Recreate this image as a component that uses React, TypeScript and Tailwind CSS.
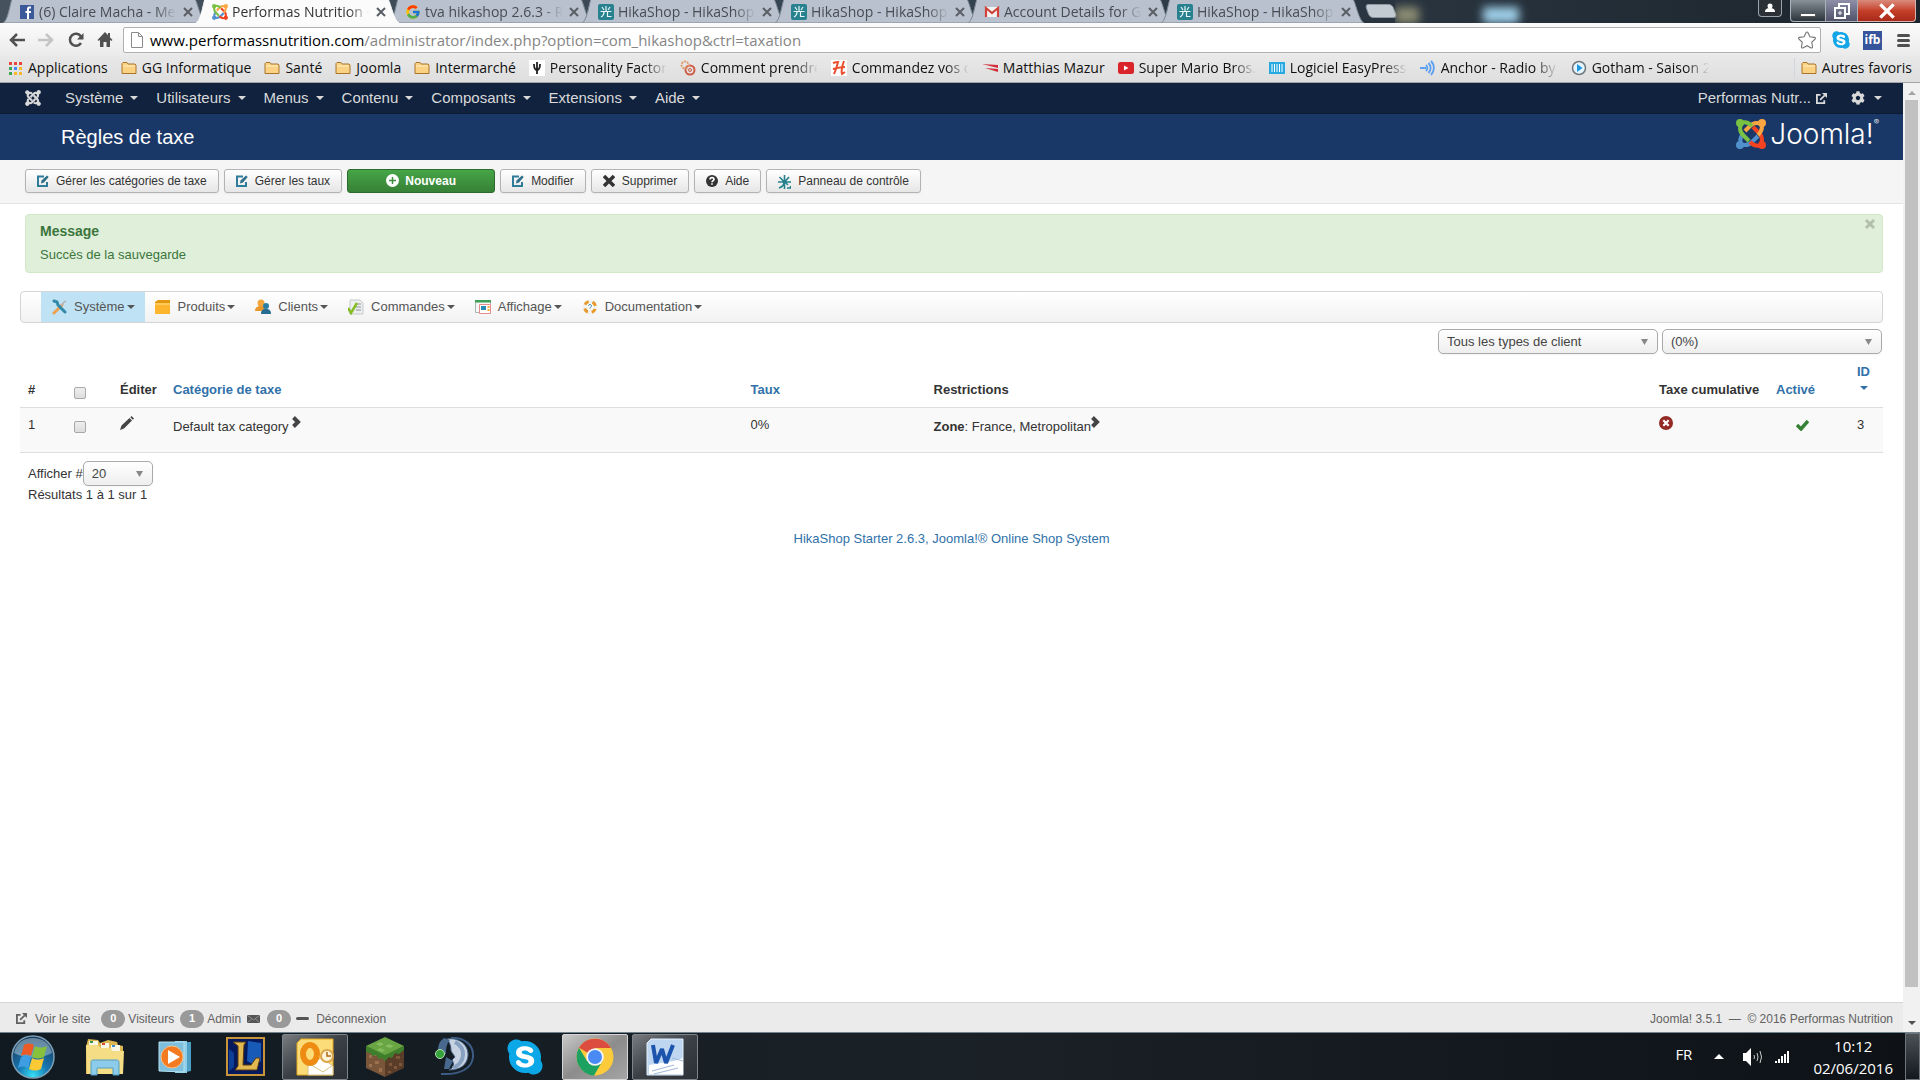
import React from "react";
import { FaJoomla, FaSkype, FaStar, FaCog } from "react-icons/fa";
import { FcGoogle } from "react-icons/fc";

/* ---------- small icons ---------- */

const Caret = ({ className = "" }: { className?: string }) => (
  <svg className={`h-1 w-2 shrink-0 ${className}`} viewBox="0 0 8 4" fill="currentColor">
    <path d="M0 0h8L4 4z" />
  </svg>
);

const Cross = ({ className = "" }: { className?: string }) => (
  <svg className={className} viewBox="0 0 12 12" stroke="currentColor" fill="none">
    <path d="M2 2l8 8M10 2l-8 8" />
  </svg>
);

const ExternalIcon = ({ className = "" }: { className?: string }) => (
  <svg className={className} viewBox="0 0 12 12" fill="none" stroke="currentColor" strokeWidth="2">
    <path d="M5 2H1v9h8V8" />
    <path d="M4.500 7.500l5-5" />
    <path d="M6.500 0H12v5.500z" fill="currentColor" stroke="none" />
  </svg>
);

const EditIcon = () => (
  <svg className="h-3 w-3" viewBox="0 0 12 12" fill="none" stroke="#2f7d9b" strokeWidth="2">
    <path d="M7 1.500H1V11h9V7" />
    <path d="M4 8.500l.5-3L10 .5 11.700 2 7 7.500z" fill="#2f6f8a" stroke="none" />
  </svg>
);

const FolderIcon = () => (
  <svg className="h-4 w-4 shrink-0" viewBox="0 0 16 16">
    <path d="M1 13.500V3.500L2 2.500h4l1 1.500h7l1 1v8.500z" fill="#fbd283" stroke="#a9752d" />
    <path d="M2 6h12" stroke="#fff0c4" />
  </svg>
);

const HikaIcon = () => (
  <svg className="h-4 w-4 shrink-0" viewBox="0 0 16 16">
    <rect width="16" height="16" rx="2" fill="#28818f" />
    <path
      d="M8 2v5M4 3l2 3M12 3l-2 3M2.500 7.500h11M6 8c0 3-1 4-3 5M9.500 8v4.500h4"
      stroke="#e8f6f7"
      strokeWidth="1.200"
      fill="none"
    />
  </svg>
);

const JoomlaMark = ({ className = "" }: { className?: string }) => (
  <svg className={className} viewBox="0 0 30 30" fill="none" strokeWidth="4" strokeLinejoin="round">
    <g stroke="#5091cd">
      <circle cx="4" cy="26" r="2" />
      <path d="M5 25C3 20 5 17 8 14M4 25c5 2 9 1 12-2l6-6" />
    </g>
    <g stroke="#f44321">
      <circle cx="26" cy="26" r="2" />
      <path d="M25 26c-5 2-8 0-11-3M25 25c2-5 1-8-2-11l-6-6" />
    </g>
    <g stroke="#f9a541">
      <circle cx="26" cy="4" r="2" />
      <path d="M25 5c2 4 0 8-3 11M25 5c-5-2-8-1-11 2l-5 5" />
    </g>
    <g stroke="#7ac143">
      <circle cx="4" cy="4" r="2" />
      <path d="M5 4c5-2 8 0 11 3M5 5c-2 5-1 8 2 11l6 6" />
    </g>
  </svg>
);

const FacebookIcon = () => (
  <svg className="h-4 w-4 shrink-0" viewBox="0 0 16 16">
    <rect x="1" y="1" width="14" height="14" fill="#3b5998" />
    <path d="M10 15V9h2V7h-2V5.500c0-.8.3-1 1-1h1V2.500h-2C8.500 2.500 8 4 8 5v2H6.500v2H8v6z" fill="#fff" />
  </svg>
);

const GmailIcon = () => (
  <svg className="h-4 w-4 shrink-0" viewBox="0 0 16 16">
    <rect x="1" y="3" width="14" height="10" fill="#f3f3f3" />
    <path d="M2 13V4l6 5 6-5v9" fill="none" stroke="#d0433a" strokeWidth="2.200" />
  </svg>
);

/* ---------- browser chrome ---------- */

const tabs = [
  { title: "(6) Claire Macha - Messages", icon: <FacebookIcon /> },
  { title: "Performas Nutrition - A", icon: <JoomlaMark className="h-4 w-4 shrink-0" />, active: true },
  { title: "tva hikashop 2.6.3 - Re", icon: <FcGoogle className="h-4 w-4 shrink-0" /> },
  { title: "HikaShop - HikaShop", icon: <HikaIcon /> },
  { title: "HikaShop - HikaShop", icon: <HikaIcon /> },
  { title: "Account Details for Gr", icon: <GmailIcon /> },
  { title: "HikaShop - HikaShop", icon: <HikaIcon /> },
];

const TabStrip = () => (
  <div className="flex h-[23px] items-stretch justify-between overflow-hidden bg-linear-to-r from-[#46535f] via-[#33424f] to-[#1c242c]">
    <div className="flex pl-[3px]">
      {tabs.map((tab, i) => (
        <div key={i} className={`relative -mr-[10px] flex w-[203px] items-center pr-3 pl-4 ${tab.active ? "z-10" : ""}`}>
          <svg className="absolute inset-0 h-full w-full" viewBox="0 0 203 23" preserveAspectRatio="none">
            <path
              d="M0 23C5 21 7 4 9 -1H192C195 4 198 21 203 23z"
              fill={tab.active ? "#fbfbfb" : "#b8c1cd"}
              stroke={tab.active ? "#fbfbfb" : "#7f8a97"}
            />
          </svg>
          <button className="relative flex min-w-0 flex-1 items-center gap-1 text-left">
            {tab.icon}
            <span
              className={`w-[142px] overflow-hidden text-[14px] leading-5 whitespace-nowrap [mask-image:linear-gradient(to_right,black_82%,transparent_97%)] ${
                tab.active ? "text-[#333]" : "text-[#474d55]"
              }`}
            >
              {tab.title}
            </span>
          </button>
          <button aria-label="Fermer l'onglet" className="relative text-[#5a5f66]">
            <Cross className="h-3 w-3 stroke-2" />
          </button>
        </div>
      ))}
      <button aria-label="Nouvel onglet" className="ml-[13px] mt-1 h-[14px] w-7 skew-x-[20deg] rounded-sm border border-[#8d98a3] bg-[#c3cbd2]" />
    </div>
    <div className="flex flex-1 items-end gap-16 overflow-hidden">
      <div className="h-4 w-6 bg-[#b9b48a] opacity-70 blur-[5px]" />
      <div className="h-4 w-9 bg-[#9fd0ea] blur-[5px]" />
    </div>
    <div className="flex items-start pr-1">
      <button aria-label="Profil" className="mr-2 flex h-[17px] w-6 items-center justify-center rounded-b border border-t-0 border-[#9aa3ab] bg-[#2a3036]">
        <svg className="h-3 w-3" viewBox="0 0 12 12" fill="#fff">
          <circle cx="6" cy="4" r="2.500" />
          <path d="M1 10c0-3 2-4 5-4s5 1 5 4z" />
        </svg>
      </button>
      <button aria-label="Réduire" className="flex h-[22px] w-9 items-end justify-center rounded-bl border border-t-0 border-[#aab2b9] bg-linear-to-b from-[#8b939a] to-[#2d353c] pb-1">
        <span className="h-[4px] w-4 border border-[#555] bg-white" />
      </button>
      <button aria-label="Restaurer" className="flex h-[22px] w-8 items-center justify-center border border-t-0 border-l-0 border-[#aab2b9] bg-linear-to-b from-[#8f90a8] to-[#50536a]">
        <svg className="h-4 w-4" viewBox="0 0 16 16" fill="none" stroke="#fff" strokeWidth="2">
          <path d="M5 4V1h10v10h-3" />
          <rect x="1" y="5" width="10" height="10" />
          <path d="M5 9h2v2H5z" strokeWidth="1" />
        </svg>
      </button>
      <button aria-label="Fermer" className="flex h-[22px] w-[58px] items-center justify-center rounded-br border border-t-0 border-l-0 border-[#d8b4ac] bg-linear-to-b from-[#d98a7c] via-[#c5402a] to-[#a8281a] text-white">
        <Cross className="h-5 w-5 stroke-2" />
      </button>
    </div>
  </div>
);

const AddressBar = () => (
  <div className="flex h-8 items-center bg-linear-to-b from-[#fbfbfb] to-[#ebebeb] pt-[2px] pr-[10px] pl-[9px]">
    <button aria-label="Précédent" className="mr-[13px]">
      <svg className="h-4 w-4" viewBox="0 0 16 16" fill="none" stroke="#505050" strokeWidth="2.500">
        <path d="M8 2L2 8l6 6M2 8h14" />
      </svg>
    </button>
    <button aria-label="Suivant" className="mr-[14px]">
      <svg className="h-4 w-4" viewBox="0 0 16 16" fill="none" stroke="#c4c4c4" strokeWidth="2.500">
        <path d="M8 2l6 6-6 6M14 8H0" />
      </svg>
    </button>
    <button aria-label="Actualiser" className="mr-[13px]">
      <svg className="h-4 w-4" viewBox="0 0 16 16" fill="none" stroke="#505050" strokeWidth="2.500">
        <path d="M13 11a6 6 0 1 1 0-6.500" />
        <path d="M15.500 1v6.500H9z" fill="#505050" stroke="none" />
      </svg>
    </button>
    <button aria-label="Accueil" className="mr-[10px]">
      <svg className="h-4 w-4" viewBox="0 0 16 16" fill="#505050">
        <path d="M8 0l7.500 8-1.300 1L13 7.800V15H9.500v-5h-3v5H3V7.800L1.800 9 .5 8z" />
        <path d="M11 1h2v4h-2z" />
      </svg>
    </button>
    <div className="flex h-[26px] flex-1 items-center rounded-xs border border-[#b0b0b0] bg-white px-1">
      <svg className="mx-[3px] h-4 w-3" viewBox="0 0 12 16" fill="#fff" stroke="#8a8a8a">
        <path d="M.5.5h7l4 4v11H.5zM7.500.5v4h4" />
      </svg>
      <div className="grid flex-1 items-center pl-1 text-[15px] leading-5">
        <input aria-label="Adresse" className="col-start-1 row-start-1 w-full outline-none" />
        <span className="pointer-events-none col-start-1 row-start-1 whitespace-nowrap text-[#858585]">
          <span className="text-black">www.performassnutrition.com</span>
          /administrator/index.php?option=com_hikashop&amp;ctrl=taxation
        </span>
      </div>
      <button aria-label="Ajouter aux favoris">
        <FaStar className="h-[18px] w-[18px] fill-white stroke-[#777] [stroke-width:36px]" />
      </button>
    </div>
    <button aria-label="Skype" className="ml-[10px]">
      <FaSkype className="h-5 w-5 bg-[radial-gradient(circle,white_45%,transparent_46%)] text-[#12a5e8]" />
    </button>
    <button aria-label="ifb" className="ml-[12px] h-[19px] w-[19px] bg-[#35549b] text-[12px] leading-4 font-bold text-white">
      ifb
    </button>
    <button aria-label="Menu" className="ml-[15px] flex w-[13px] flex-col gap-[2px]">
      <span className="h-[3px] rounded-xs bg-[#505050]" />
      <span className="h-[3px] rounded-xs bg-[#505050]" />
      <span className="h-[3px] rounded-xs bg-[#505050]" />
    </button>
  </div>
);

const svg16 = "h-4 w-4 shrink-0";
const bookmarks = [
  {
    label: "Applications",
    icon: (
      <svg className={svg16} viewBox="0 0 16 16">
        <path d="M2 2h3v3H2zM7 2h3v3H7zM12 2h3v3h-3z" fill="#e8453c" />
        <path d="M2 7h3v3H2zM2 12h3v3H2z" fill="#3aa757" />
        <path d="M7 7h3v3H7z" fill="#4587f3" />
        <path d="M12 7h3v3h-3zM7 12h3v3H7zM12 12h3v3h-3z" fill="#f9bb2d" />
      </svg>
    ),
  },
  { label: "GG Informatique", icon: <FolderIcon /> },
  { label: "Santé", icon: <FolderIcon /> },
  { label: "Joomla", icon: <FolderIcon /> },
  { label: "Intermarché", icon: <FolderIcon /> },
  {
    label: "Personality Factory",
    cut: true,
    icon: (
      <svg className={svg16} viewBox="0 0 16 16">
        <rect width="16" height="16" fill="#fff" />
        <path d="M8 2v12M5 4c0 5 1 6 3 6M11 4c0 5-1 6-3 6" stroke="#222" strokeWidth="1.800" fill="none" />
      </svg>
    ),
  },
  {
    label: "Comment prendre u",
    cut: true,
    icon: (
      <svg className={svg16} viewBox="0 0 16 16" fill="none" stroke="#cf5b45">
        <circle cx="10" cy="10" r="4.500" strokeWidth="2" />
        <circle cx="5" cy="5" r="3.500" strokeDasharray="2 1" stroke="#e09a6a" strokeWidth="2" />
        <circle cx="10" cy="10" r="1.500" />
      </svg>
    ),
  },
  {
    label: "Commandez vos c",
    cut: true,
    icon: (
      <svg className={svg16} viewBox="0 0 16 16">
        <rect width="16" height="16" fill="#fff" />
        <path d="M2 3c3-1 4-1 5-1-1 4-2 8-4 12M13 1c-2 5-3 9-2 13l3-2M2 9c4-1 8-2 12-2" stroke="#e8502f" strokeWidth="2" fill="none" />
      </svg>
    ),
  },
  {
    label: "Matthias Mazur",
    icon: (
      <svg className={svg16} viewBox="0 0 16 16" fill="#d22d38">
        <path d="M0 4l16 1v3zM3 8l13 1v3z" />
      </svg>
    ),
  },
  {
    label: "Super Mario Bros.",
    cut: true,
    icon: (
      <svg className={svg16} viewBox="0 0 16 16">
        <rect y="2" width="16" height="12" rx="2.500" fill="#d9252a" />
        <path d="M6 5.500v5L10.500 8z" fill="#fff" />
      </svg>
    ),
  },
  {
    label: "Logiciel EasyPress",
    cut: true,
    icon: (
      <svg className={svg16} viewBox="0 0 16 16">
        <path d="M0 2h16v12H0z" fill="#27aae1" />
        <path d="M3 4v8M5.500 4v8M8 4v8M10.500 4v8M13 4v8" stroke="#fff" />
      </svg>
    ),
  },
  {
    label: "Anchor - Radio by t",
    cut: true,
    icon: (
      <svg className={svg16} viewBox="0 0 16 16" fill="none" stroke="#5a9ff0" strokeWidth="1.800">
        <path d="M0 8h6M6 5a4 4 0 0 1 0 6M8.500 3a7 7 0 0 1 0 10M11 1a10 10 0 0 1 0 14" />
      </svg>
    ),
  },
  {
    label: "Gotham - Saison 2",
    cut: true,
    icon: (
      <svg className={svg16} viewBox="0 0 16 16">
        <circle cx="8" cy="8" r="6.500" fill="#e6f4fb" stroke="#6f767c" strokeWidth="1.500" />
        <path d="M6 4v8l5.500-4z" fill="#1b96e0" />
      </svg>
    ),
  },
];

const BookmarkBar = () => (
  <nav className="flex h-7 items-center justify-between border-b border-[#a5a5a5] bg-linear-to-b from-[#e9e9e9] to-[#dedede] pr-2 pb-[2px] pl-[7px] text-[14px] leading-5 text-[#111]">
    <div className="flex gap-[13px]">
      {bookmarks.map((b) => (
        <a href="#" key={b.label} className="flex items-center gap-[5px] whitespace-nowrap">
          {b.icon}
          <span
            className={
              b.cut
                ? "w-[117px] overflow-hidden [mask-image:linear-gradient(to_right,black_80%,transparent)]"
                : ""
            }
          >
            {b.label}
          </span>
        </a>
      ))}
    </div>
    <a href="#" className="flex items-center gap-[5px] border-l border-[#cfd6dd] pl-[6px] whitespace-nowrap">
      <FolderIcon />
      Autres favoris
    </a>
  </nav>
);

/* ---------- administration page ---------- */

const menus = ["Système", "Utilisateurs", "Menus", "Contenu", "Composants", "Extensions", "Aide"];

const AdminNav = () => (
  <nav className="flex h-[31px] items-center justify-between border-b border-[#0c192e] bg-[#10223e] pr-[21px] pl-6 text-[15px] text-[#d9d9d9]">
    <div className="flex items-center">
      <FaJoomla className="mr-[23px] h-[18px] w-[18px]" />
      <div className="flex gap-[18px]">
        {menus.map((m) => (
          <button key={m} className="flex items-center gap-[7px]">
            {m}
            <Caret />
          </button>
        ))}
      </div>
    </div>
    <div className="flex items-center">
      <a href="#" className="flex items-center gap-[5px]">
        Performas Nutr...
        <ExternalIcon className="h-[11px] w-[11px]" />
      </a>
      <button aria-label="Paramètres" className="ml-6 flex items-center gap-[9px]">
        <FaCog className="h-[14px] w-[14px]" />
        <Caret />
      </button>
    </div>
  </nav>
);

const PageTitle = () => (
  <header className="flex h-[46px] items-center justify-between bg-[#1a3867] pr-6 pl-[61px] text-white">
    <h1 className="text-[20px] leading-6">Règles de taxe</h1>
    <div className="flex items-center gap-1 pb-[6px]">
      <JoomlaMark className="h-[30px] w-[30px]" />
      <span className="flex font-['Inter'] text-[28px] leading-7 font-light">
        Joomla!<sup className="text-[8px] leading-3">®</sup>
      </span>
    </div>
  </header>
);

const toolbarButton =
  "flex h-6 items-center gap-[7px] rounded-[3px] border border-[#b3b3b3] bg-linear-to-b from-white to-[#e6e6e6] px-[11px] text-[12px] text-[#333] shadow-xs";

const Toolbar = () => (
  <div className="flex h-11 items-center gap-[5px] border-b border-[#e3e3e3] bg-[#f5f5f5] px-[25px] pb-[2px] whitespace-nowrap">
    <button className={toolbarButton}>
      <EditIcon />
      Gérer les catégories de taxe
    </button>
    <button className={toolbarButton}>
      <EditIcon />
      Gérer les taux
    </button>
    <button className="flex h-6 w-[148px] items-center justify-center gap-[6px] rounded-[3px] border border-[#2d6a2d] bg-linear-to-b from-[#46a546] to-[#378137] text-[12px] font-bold text-white">
      <svg className="h-[13px] w-[13px]" viewBox="0 0 13 13">
        <circle cx="6.500" cy="6.500" r="6.500" fill="#fff" />
        <path d="M6.500 3v7M3 6.500h7" stroke="#3d8e3d" strokeWidth="1.500" />
      </svg>
      Nouveau
    </button>
    <button className={toolbarButton}>
      <EditIcon />
      Modifier
    </button>
    <button className={toolbarButton}>
      <svg className="h-3 w-3" viewBox="0 0 12 12" stroke="#333" strokeWidth="3.500">
        <path d="M1 1l10 10M11 1L1 11" />
      </svg>
      Supprimer
    </button>
    <button className={toolbarButton}>
      <svg className="h-3 w-3" viewBox="0 0 12 12">
        <circle cx="6" cy="6" r="6" fill="#333" />
        <path d="M4 4.500C4 2 8 2 8 4.500 8 6 6 5.500 6 7.300M6 8.300v1.500" stroke="#fff" strokeWidth="1.600" fill="none" />
      </svg>
      Aide
    </button>
    <button className={toolbarButton}>
      <svg className="mt-[2px] h-[14px] w-[13px]" viewBox="0 0 13 14" fill="none" stroke="#23808c" strokeWidth="1.600">
        <path d="M6.500 0v14M1.500 2l5 5 4.500-5M0 7h13M6 7c0 3-2 5-5 6M7 7l3 3M9 13h3.500v-2" />
      </svg>
      Panneau de contrôle
    </button>
  </div>
);

const Alert = () => (
  <div role="alert" className="relative ml-[5px] rounded-[4px] border border-[#d0e9c6] bg-[#dfefd9] px-[14px] pt-2 pb-2 text-[#3c763d]">
    <h4 className="text-[14px] leading-4 font-bold">Message</h4>
    <p className="mt-[7px] text-[13px] leading-[18px]">Succès de la sauvegarde</p>
    <button aria-label="Fermer le message" className="absolute top-[3px] right-[6px] text-[#b2bfad]">
      <Cross className="h-3 w-3 [stroke-width:3px]" />
    </button>
  </div>
);

const hikaMenu = [
  {
    label: "Système",
    active: true,
    icon: (
      <>
        <path d="M3 14L11 6" stroke="#eda04e" strokeWidth="3" strokeLinecap="round" />
        <path d="M10 7l3-4 2-1" stroke="#b5b5b5" strokeWidth="1.500" fill="none" />
        <path d="M3 2l3 1 1 3 7 7" stroke="#3389a8" strokeWidth="3" fill="none" strokeLinecap="round" />
      </>
    ),
  },
  {
    label: "Produits",
    icon: (
      <>
        <path d="M0 3l3-2h12v3H0z" fill="#e69710" />
        <path d="M0 4h15v11H0z" fill="#fcb52c" />
        <path d="M0 5h15" stroke="#ffe08a" />
      </>
    ),
  },
  {
    label: "Clients",
    icon: (
      <>
        <circle cx="6" cy="4" r="3.500" fill="#f2a63b" />
        <path d="M0 12c0-4 3-5 6-5s5 1 5 5z" fill="#ea982a" />
        <circle cx="11" cy="7" r="3" fill="#2b7fa5" />
        <path d="M6 15c0-4 2-5 5-5s5 1 5 5z" fill="#256d91" />
      </>
    ),
  },
  {
    label: "Commandes",
    icon: (
      <>
        <path d="M2 1h10l3 3v11H2z" fill="#eceeef" stroke="#c5cacc" />
        <path d="M7 5h6M8 8h5M8 11h5" stroke="#adb3b5" strokeWidth="1.500" />
        <path d="M0 9l3 5L9 4" stroke="#85bd27" strokeWidth="2.500" fill="none" />
      </>
    ),
  },
  {
    label: "Affichage",
    icon: (
      <>
        <path d="M.5 1.500h15v12H.5z" fill="#f6f6f6" stroke="#a9b8b3" />
        <path d="M0 1h16v2.500H0z" fill="#3f9f57" />
        <path d="M4.500 5.500h11v9h-11z" fill="#fff" stroke="#e58c8c" />
        <path d="M6 7h5v4H6z" fill="#2a8bb4" />
        <path d="M12.500 7h2v2h-2zM12.500 10h2v2h-2z" fill="#f0a63a" />
      </>
    ),
  },
  {
    label: "Documentation",
    icon: (
      <>
        <circle cx="8" cy="8" r="5.500" stroke="#f2f2f2" strokeWidth="4" fill="none" />
        <circle cx="8" cy="8" r="5.500" stroke="#e79a2b" strokeWidth="3" fill="none" strokeDasharray="4.600 4.040" strokeDashoffset="-2" />
        <path d="M6.500 7c0-2 3-2 3 0 0 1-1.500 1-1.500 2.500" stroke="#2b7fa5" fill="none" />
      </>
    ),
  },
];

const HikaMenu = () => (
  <nav className="flex h-8 rounded-[4px] border border-[#d4d4d4] bg-linear-to-b from-white to-[#f2f2f2] pl-5 text-[13px] text-[#555]">
    {hikaMenu.map((item) => (
      <button
        key={item.label}
        className={`flex items-center px-[10px] ${item.active ? "bg-[#bfe2f5]" : ""}`}
      >
        <svg className="mr-[7px] h-4 w-4 shrink-0" viewBox="0 0 16 16">
          {item.icon}
        </svg>
        {item.label}
        <Caret className="ml-[2px]" />
      </button>
    ))}
  </nav>
);

type SelectBoxProps = { id: string; label: string; value: string; className: string };

const SelectBox = ({ id, label, value, className }: SelectBoxProps) => (
  <div className={`relative ${className}`}>
    <label htmlFor={id} className="sr-only">{label}</label>
    <select
      id={id}
      className="block h-[25px] w-full appearance-none rounded-[5px] border border-[#aaa] bg-linear-to-b from-white to-[#eee] px-2 text-[13px] text-[#444] shadow-xs"
    >
      <option>{value}</option>
    </select>
    <svg className="pointer-events-none absolute top-[10px] right-[10px] h-[6px] w-[7px]" viewBox="0 0 7 6" fill="#888">
      <path d="M0 0h7L3.500 6z" />
    </svg>
  </div>
);

const Chevron = () => (
  <svg className="mb-[3px] inline h-3 w-[9px] align-baseline" viewBox="0 0 9 12" fill="none" stroke="#444" strokeWidth="4">
    <path d="M1.500 1.500L6 6l-4.500 4.500" />
  </svg>
);

const checkbox =
  "block h-3 w-3 appearance-none rounded-[2px] border border-[#a9a9a9] bg-linear-to-b from-[#eee] to-[#ddd]";

const TaxTable = () => (
  <table className="mt-[1px] w-full table-fixed border-collapse text-left text-[13px] leading-[18px] text-[#333]">
    <thead>
      <tr className="border-b border-[#ddd] align-bottom [&>th]:p-2">
        <th className="w-[46px]">#</th>
        <th className="w-[46px]">
          <input type="checkbox" aria-label="Tout cocher" className={checkbox} />
        </th>
        <th className="w-[53px] whitespace-nowrap">Éditer</th>
        <th className="w-[31%]"><a href="#" className="text-[#3071a9]">Catégorie de taxe</a></th>
        <th className="w-[183px]"><a href="#" className="text-[#3071a9]">Taux</a></th>
        <th>Restrictions</th>
        <th className="w-[117px] whitespace-nowrap">Taxe cumulative</th>
        <th className="w-[81px]"><a href="#" className="text-[#3071a9]">Activé</a></th>
        <th className="w-[34px]">
          <a href="#" className="block text-[#3071a9]">
            ID
            <Caret className="mt-[5px] mb-[9px] ml-[3px]" />
          </a>
        </th>
      </tr>
    </thead>
    <tbody>
      <tr className="h-[45px] border-b border-[#ddd] bg-[#f9f9f9] align-top [&>td]:p-2">
        <td>1</td>
        <td>
          <input type="checkbox" aria-label="Cocher la ligne 1" className={`${checkbox} mt-[5px]`} />
        </td>
        <td>
          <button aria-label="Modifier la taxe" className="block">
            <svg className="h-[14px] w-[14px]" viewBox="0 0 14 14" fill="#444">
              <path d="M0 14l1.500-4.500L9.500 2 12 4.500 4 12.500zM10.300 1.200L11.500 0 14 2.500l-1.200 1.200z" />
            </svg>
          </button>
        </td>
        <td>Default tax category <Chevron /></td>
        <td>0%</td>
        <td><b>Zone</b>: France, Metropolitan<Chevron /></td>
        <td>
          <svg className="h-[14px] w-[14px]" viewBox="0 0 13 13">
            <circle cx="6.500" cy="6.500" r="6.500" fill="#942a25" />
            <path d="M4 4l5 5M9 4L4 9" stroke="#fff" strokeWidth="2" />
          </svg>
        </td>
        <td>
          <svg className="mt-[3px] ml-5 h-3 w-[13px]" viewBox="0 0 13 12" fill="none" stroke="#378137" strokeWidth="3.500">
            <path d="M1 6l4 4 7-8" />
          </svg>
        </td>
        <td>3</td>
      </tr>
    </tbody>
  </table>
);

const badge =
  "flex h-[18px] w-6 items-center justify-center rounded-full bg-[#999] text-[11px] font-bold text-white";

const StatusBar = () => (
  <footer className="flex h-[30px] items-center justify-between border-t border-[#d4d4d4] bg-[#ebebeb] pt-[2px] pr-[10px] pl-4 text-[12px] text-[#626262]">
    <div className="flex items-center">
      <a href="#" className="mr-[11px] flex items-center gap-2">
        <ExternalIcon className="h-[11px] w-[11px]" />
        Voir le site
      </a>
      <span className={badge}>0</span>
      <span className="mr-[6px] ml-[3px]">Visiteurs</span>
      <span className={badge}>1</span>
      <span className="mr-[6px] ml-[3px]">Admin</span>
      <svg className="mr-[7px] h-2 w-[13px]" viewBox="0 0 13 8">
        <path d="M0 0h13v8H0z" fill="#555" />
        <path d="M0 0l6.500 5L13 0M0 8l4.500-4M13 8L8.500 4" stroke="#aaa" strokeWidth=".7" fill="none" />
      </svg>
      <span className={badge}>0</span>
      <span className="mr-[7px] ml-[5px] h-[3px] w-[13px] rounded-xs bg-[#555]" />
      <a href="#">Déconnexion</a>
    </div>
    <p className="whitespace-pre">Joomla! 3.5.1  —  © 2016 Performas Nutrition</p>
  </footer>
);

const Scrollbar = () => (
  <div className="flex w-[17px] flex-col items-center justify-between bg-[#f1f1f1] py-[6px]">
    <Caret className="mt-[2px] rotate-180 text-[#a3a3a3]" />
    <div className="mt-[5px] mb-[34px] w-[13px] flex-1 bg-[#c1c1c1]" />
    <Caret className="mb-[1px] text-[#505050]" />
  </div>
);

/* ---------- taskbar ---------- */

const ExplorerIcon = () => (
  <svg className="h-10 w-10" viewBox="0 0 40 40">
    <path d="M1 10l2-8 10 1 2 3 8-3 9 2 1 3 5 1v28H1z" fill="#dcb74f" />
    <path d="M4 4h9v6H4zM16 6h8v6h-8zM26 8h9v6h-9z" fill="#f8f6e4" />
    <path d="M5 4h3v2H5z" fill="#349a4b" />
    <path d="M17 6h3v2h-3z" fill="#d34b31" />
    <path d="M27 8h3v2h-3z" fill="#3b8fd0" />
    <path d="M1 8h12l3 3h9l3 3h11l-1 23H2z" fill="#f4dd85" />
    <path d="M6 38V26c0-3 1-3 3-3h22c2 0 3 0 3 3v12h-6v-7H12v7z" fill="#8ccbe9" stroke="#559fc4" />
  </svg>
);

const MediaPlayerIcon = () => (
  <svg className="h-[34px] w-[34px]" viewBox="0 0 34 34">
    <path d="M20 2h13v29l-10 2z" fill="#4d9fc5" />
    <path d="M17 1h12v32H17z" fill="#8fcde8" />
    <path d="M1 2h25v30L1 31z" fill="#7dbfdd" stroke="#b5e1f1" />
    <circle cx="14" cy="17" r="11" fill="#f37a20" stroke="#fbc28a" />
    <path d="M10 10v14l12-7z" fill="#fff" />
  </svg>
);

const LeagueIcon = () => (
  <svg className="h-[39px] w-[39px]" viewBox="0 0 39 39">
    <rect x="1" y="1" width="37" height="37" fill="#051a5c" stroke="#c8953b" strokeWidth="2" />
    <path d="M22 4l13 2v18l-6 4-8-4z" fill="#1c6ad0" opacity=".8" />
    <path d="M3 12l5 4v14l-5 4z" fill="#1250b0" opacity=".7" />
    <path d="M7 5h13l-2 3-1 20h8l5-7h4l-3 12H9l3-4V9z" fill="#e2b950" stroke="#5c390f" />
  </svg>
);

const OutlookIcon = () => (
  <svg className="h-[38px] w-[38px]" viewBox="0 0 38 38">
    <path d="M5 1h32v36H1V5z" fill="#fbdc79" stroke="#e7a91f" />
    <path d="M12 25l14-5 11 8v9H12z" fill="#fff" stroke="#d8c384" />
    <path d="M12 25l15 9 10-7" fill="none" stroke="#d8c384" />
    <ellipse cx="14" cy="16" rx="7" ry="9" fill="none" stroke="#ed8b12" strokeWidth="6" />
    <circle cx="31" cy="18" r="6" fill="#fff4d8" stroke="#dba54b" strokeWidth="2" />
    <path d="M31 14v4h4" stroke="#b06a10" strokeWidth="1.500" fill="none" />
  </svg>
);

const MinecraftIcon = () => (
  <svg className="h-10 w-[38px]" viewBox="0 0 38 40">
    <path d="M0 9l19 9v22L0 31z" fill="#79553a" />
    <path d="M38 9l-19 9v22l19-9z" fill="#593d29" />
    <path d="M3 18h3v3H3zM9 24h4v3H9zM3 27h3v3H3zM13 31h3v4h-3zM7 16h3v3H7z" fill="#9b7150" />
    <path d="M23 26h3v3h-3zM30 19h4v3h-4zM28 29h3v3h-3zM33 26h3v3h-3zM22 34h3v2h-3z" fill="#7d573b" />
    <path d="M19 0l19 9-19 10L0 9z" fill="#6aa544" />
    <path d="M0 9l19 9v6l-3-3-3 1-3-4-3 1-3-3-4-1zM38 9l-19 9v6l4-4 3 1 3-5 4 1 5-4z" fill="#3f7f2c" />
    <path d="M14 5l4 2-4 2-4-2zM23 7l5 2-4 2-5-2zM14 11l5 2-3 2-5-2z" fill="#86bd5e" />
  </svg>
);

const TeamspeakIcon = () => (
  <svg className="h-[39px] w-10" viewBox="0 0 40 39">
    <path d="M16 1C29 0 39 8 38 20 37 31 26 38 6 37" fill="none" stroke="#3c5c83" strokeWidth="2" />
    <path d="M12 2c12-2 22 6 21 17-1 9-8 14-19 14 6-3 5-7 3-10l3-3-4-6c0-5-1-8-4-12z" fill="#c7d3e2" stroke="#415b7c" />
    <path d="M20 5c11 6 11 20-2 26" fill="none" stroke="#89a1c0" strokeWidth="4" />
    <path d="M9 1C3 5 2 12 4 17h7c0-4 0-10 4-14zM11 20l7 4-4 8H9z" fill="#49688e" />
    <circle cx="5" cy="17" r="4.500" fill="#35a23a" stroke="#b3dfb3" />
  </svg>
);

const ChromeIcon = () => (
  <svg className="h-[38px] w-[38px]" viewBox="0 0 38 38">
    <circle cx="19" cy="19" r="18.500" fill="#fccb3c" />
    <path d="M19 19L3 9.800A18.500 18.500 0 0 1 35 10H19z" fill="#dc4c3f" />
    <path d="M3 9.800A18.500 18.500 0 0 0 18 37.500L26.500 23 19 19 11 23z" fill="#1da160" />
    <circle cx="19" cy="19" r="8.800" fill="#f4f4f4" />
    <circle cx="19" cy="19" r="7" fill="#4a8af4" />
  </svg>
);

const WordIcon = () => (
  <svg className="h-[38px] w-[38px]" viewBox="0 0 38 38">
    <path d="M5 1h32v36H1V5z" fill="#bfd6f1" stroke="#e5f0fb" />
    <path d="M3 27l25-4 9-3v16H3z" fill="#fff" />
    <path d="M6 33l22-6M8 36l24-6M26 20l11 3" stroke="#9fb6d8" />
    <path d="M7 7l3 18 6-14 4 14L27 7" fill="none" stroke="#1c54ad" strokeWidth="4" strokeLinejoin="bevel" />
  </svg>
);

const StartIcon = () => (
  <svg className="h-11 w-11" viewBox="0 0 44 44">
    <defs>
      <radialGradient id="orb" cx="50%" cy="95%" r="90%">
        <stop offset="0" stopColor="#35e2f8" />
        <stop offset=".4" stopColor="#1778b2" />
        <stop offset="1" stopColor="#1b3a5c" />
      </radialGradient>
    </defs>
    <circle cx="22" cy="22" r="21" fill="url(#orb)" stroke="#7c9fb5" strokeWidth="1.500" />
    <path d="M3 18C5 8 13 3 22 3s17 5 19 15C30 24 14 24 3 18z" fill="#c6dfec" opacity=".45" />
    <path d="M13 10c4-2 6-2 10 0l-3 11c-3-2-6-2-10 0z" fill="#ec5b26" />
    <path d="M24 11c4 2 7 2 12 0l-3 11c-4 2-8 2-12 0z" fill="#88c23d" />
    <path d="M10 22c4-2 6-2 10 0l-3 11c-3-2-6-2-10 0z" fill="#3f9ee2" />
    <path d="M21 23c4 2 7 2 12 0l-3 11c-4 2-8 2-12 0z" fill="#fbc934" />
  </svg>
);

const apps = [
  { name: "Explorateur", icon: <ExplorerIcon /> },
  { name: "Lecteur Windows Media", icon: <MediaPlayerIcon /> },
  { name: "League of Legends", icon: <LeagueIcon /> },
  { name: "Outlook", icon: <OutlookIcon />, state: "open" },
  { name: "Minecraft", icon: <MinecraftIcon /> },
  { name: "TeamSpeak", icon: <TeamspeakIcon /> },
  {
    name: "Skype",
    icon: <FaSkype className="h-10 w-10 bg-[radial-gradient(circle,white_45%,transparent_46%)] text-[#0ba7e6]" />,
  },
  { name: "Chrome", icon: <ChromeIcon />, state: "front" },
  { name: "Word", icon: <WordIcon />, state: "open" },
];

const Taskbar = () => (
  <div className="flex h-12 items-stretch justify-between border-t border-[#71838f] bg-linear-to-r from-[#111a21] via-[#1a2127] to-[#0e1217] text-white">
    <div className="flex items-center gap-1">
      <button aria-label="Démarrer" className="mr-[13px] ml-[11px]">
        <StartIcon />
      </button>
      {apps.map((app) => (
        <button
          key={app.name}
          aria-label={app.name}
          className={`flex h-[46px] w-[66px] items-center justify-center rounded-[2px] ${
            app.state === "front"
              ? "border border-[#d5d5d5] bg-linear-to-br from-[#c9c9c9] via-[#8c8c8c] to-[#a5a5a5]"
              : app.state === "open"
                ? "border border-[#7d848a] bg-linear-to-br from-[#787c80] via-[#3a4046] to-[#2b3036]"
                : ""
          }`}
        >
          {app.icon}
        </button>
      ))}
    </div>
    <div className="flex items-center">
      <span className="mr-[22px] pb-1 text-[15px]">FR</span>
      <svg className="mr-[19px] h-[5px] w-[10px]" viewBox="0 0 10 5" fill="#fff">
        <path d="M0 5h10L5 0z" />
      </svg>
      <svg className="mr-[12px] h-[18px] w-5" viewBox="0 0 20 18" fill="none" stroke="#ccc">
        <path d="M0 5h3l5-5v18l-5-5H0z" fill="#fff" stroke="none" />
        <path d="M11 7q1 2 0 4M14 5q2 4 0 8M17 3q3 6 0 12" />
      </svg>
      <svg className="mr-6 h-3 w-[14px]" viewBox="0 0 14 12" fill="#fff">
        <path d="M0 10h2v2H0zM3 8h2v4H3zM6 5h2v7H6zM9 3h2v9H9zM12 0h2v12h-2z" />
      </svg>
      <div className="mr-3 text-center text-[15px] leading-[22px]">
        <p>10:12</p>
        <p>02/06/2016</p>
      </div>
      <button aria-label="Afficher le bureau" className="h-full w-[15px] border border-[#6d747a] bg-linear-to-b from-[#4c5359] to-[#14181c]" />
    </div>
  </div>
);

const App = () => {
  return (
    <div className="flex min-h-screen flex-col bg-white font-['Open_Sans',sans-serif]">
      <TabStrip />
      <AddressBar />
      <BookmarkBar />
      <div className="flex flex-1 font-['Liberation_Sans',sans-serif]">
        <div className="flex min-w-0 flex-1 flex-col">
          <AdminNav />
          <PageTitle />
          <Toolbar />
          <main className="flex-1 px-5 pt-[10px] text-[13px] text-[#333]">
            <Alert />
            <div className="mt-[18px]">
              <HikaMenu />
            </div>
            <div className="mt-[6px] flex justify-end gap-1 pr-[1px]">
              <SelectBox id="type" label="Type de client" value="Tous les types de client" className="w-[220px]" />
              <SelectBox id="rate" label="Taux de taxe" value="(0%)" className="w-[220px]" />
            </div>
            <TaxTable />
            <div className="px-2 pt-2 leading-[18px]">
              <div className="flex items-center">
                Afficher #
                <SelectBox id="limit" label="Nombre de lignes" value="20" className="w-[70px]" />
              </div>
              <p>Résultats 1 à 1 sur 1</p>
            </div>
            <p className="mt-[25px] text-center">
              <a href="#" className="text-[#3071a9]">
                HikaShop Starter 2.6.3, Joomla!® Online Shop System
              </a>
            </p>
          </main>
          <StatusBar />
        </div>
        <Scrollbar />
      </div>
      <Taskbar />
    </div>
  );
};

export default App;
